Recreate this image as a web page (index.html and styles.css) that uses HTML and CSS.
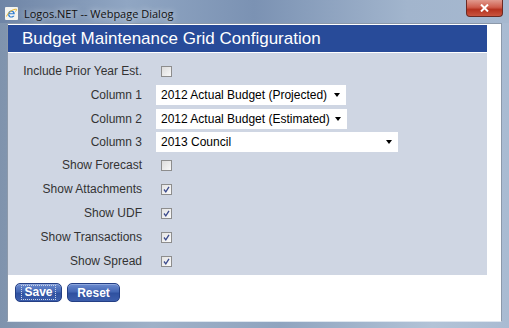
FILE: index.html
```html
<!DOCTYPE html>
<html>
<head>
<meta charset="utf-8">
<link rel="stylesheet" href="styles.css">
</head>
<body>
<div class="window">
  <div class="titlebar">
    <svg class="ie-icon" width="13" height="13" viewBox="0 0 13 13">
      <rect x="0" y="0" width="13" height="13" rx="1" fill="#f4f4f0"/>
      <path d="M3 7.2 H9.8 C9.8 5 8.4 3.6 6.5 3.6 C4.5 3.6 3 5.2 3 7.2 C3 9.3 4.5 10.6 6.4 10.6 C7.8 10.6 9 9.9 9.5 8.8 H7.9 C7.6 9.3 7.1 9.5 6.5 9.5 C5.5 9.5 4.7 8.9 4.6 7.9 Z M4.7 6.3 C4.9 5.3 5.6 4.7 6.5 4.7 C7.4 4.7 8.1 5.3 8.2 6.3 Z" fill="#2a7ad0"/>
      <path d="M1.5 9.5 C3 5 8 2 11.5 2.2 C12 3 11 4 10.2 4.6" fill="none" stroke="#e8b32a" stroke-width="1"/>
    </svg>
    <span class="title-text">Logos.NET -- Webpage Dialog</span>
    <div class="close-btn">
      <svg width="9" height="8" viewBox="0 0 9 8"><path d="M1 0.5 L8 7.5 M8 0.5 L1 7.5" stroke="#fff" stroke-width="2"/></svg>
    </div>
  </div>
  <div class="client">
    <div class="header">Budget Maintenance Grid Configuration</div>
    <div class="panel">
      <div class="row r24"><span class="label">Include Prior Year Est.</span><span class="chk"></span></div>
      <div class="row r24"><span class="label">Column 1</span><div class="select w190">2012 Actual Budget (Projected)<span class="arrow"></span></div></div>
      <div class="row r23"><span class="label">Column 2</span><div class="select w191">2012 Actual Budget (Estimated)<span class="arrow"></span></div></div>
      <div class="row r23"><span class="label">Column 3</span><div class="select w242">2013 Council<span class="arrow"></span></div></div>
      <div class="row r24"><span class="label">Show Forecast</span><span class="chk"></span></div>
      <div class="row r24"><span class="label">Show Attachments</span><span class="chk on"><svg width="9" height="9" viewBox="0 0 9 9"><path d="M2 4.5 L3.8 6.8 L7 1.8" fill="none" stroke="#3b4a8c" stroke-width="1.3"/></svg></span></div>
      <div class="row r24"><span class="label">Show UDF</span><span class="chk on"><svg width="9" height="9" viewBox="0 0 9 9"><path d="M2 4.5 L3.8 6.8 L7 1.8" fill="none" stroke="#3b4a8c" stroke-width="1.3"/></svg></span></div>
      <div class="row r24"><span class="label">Show Transactions</span><span class="chk on"><svg width="9" height="9" viewBox="0 0 9 9"><path d="M2 4.5 L3.8 6.8 L7 1.8" fill="none" stroke="#3b4a8c" stroke-width="1.3"/></svg></span></div>
      <div class="row r24"><span class="label">Show Spread</span><span class="chk on"><svg width="9" height="9" viewBox="0 0 9 9"><path d="M2 4.5 L3.8 6.8 L7 1.8" fill="none" stroke="#3b4a8c" stroke-width="1.3"/></svg></span></div>
    </div>
    <div class="buttons">
      <button class="btn save"><span class="focus">Save</span></button>
      <button class="btn reset">Reset</button>
    </div>
  </div>
</div>
</body>
</html>
```
FILE: styles.css
```css
* { box-sizing: border-box; }
html, body { margin: 0; padding: 0; }
body { width: 509px; height: 328px; overflow: hidden; font-family: "Liberation Sans", Arial, sans-serif; }

.window {
  width: 509px;
  height: 328px;
  display: flex;
  flex-direction: column;
  background: linear-gradient(90deg, #7f93ad 0%, #9fb1c8 30%, #8fa4bf 55%, #b2c3d7 85%, #a9bbd2 100%);
  padding: 0 7px 6px 7px;
}

.titlebar {
  height: 23px;
  display: flex;
  align-items: center;
  position: relative;
  margin: 0 -7px;
  padding-left: 5px;
  background: linear-gradient(90deg, #6f85a6 0%, #90a6c3 25%, #7b92b3 50%, #a2b5cd 80%, #a6b8cf 100%);
}
.ie-icon { margin-top: 3px; }
.title-text {
  margin-left: 6px;
  margin-top: 3px;
  font-family: "Open Sans", "DejaVu Sans", sans-serif;
  font-size: 11px;
  color: #111;
  text-shadow: 0 0 6px rgba(255,255,255,0.8);
}
.close-btn {
  position: absolute;
  right: 6px;
  top: 0;
  width: 37px;
  height: 17px;
  border: 1px solid #6b2a23;
  border-top: none;
  border-radius: 0 0 4px 4px;
  background: linear-gradient(#e19a8e 0%, #cf5e4d 45%, #b5321f 60%, #c9553f 100%);
  display: flex;
  align-items: center;
  justify-content: center;
}

.client {
  flex: 1;
  background: #fff;
  border: 1px solid #8c99aa;
  border-bottom-color: #dfe6ef;
  padding: 0 14px 0 0;
  display: flex;
  flex-direction: column;
}

.header {
  height: 27px;
  margin-top: 1px;
  background: #284b99;
  color: #fff;
  font-size: 17px;
  padding-left: 14px;
  line-height: 27px;
  border-bottom: 1px solid #fff;
  height: 28px;
}

.panel {
  background: #cfd6e3;
  height: 222px;
  padding-top: 6px;
  display: flex;
  flex-direction: column;
}

.row {
  display: flex;
  align-items: center;
}
.r24 { height: 24px; }
.r23 { height: 23px; }

.label {
  width: 134px;
  text-align: right;
  font-size: 12px;
  color: #333;
  margin-right: 14px;
}

.chk {
  width: 11px;
  height: 11px;
  margin-left: 5px;
  border: 1px solid #8d8d8d;
  background: linear-gradient(135deg, #dcdcdc, #f8f8f8);
  display: flex;
  align-items: center;
  justify-content: center;
}
.chk.on { background: linear-gradient(135deg, #e4e4e4, #fafafa); }

.select {
  height: 20px;
  background: #fff;
  font-size: 12px;
  color: #000;
  padding-left: 5px;
  display: flex;
  align-items: center;
  position: relative;
}
.w190 { width: 190px; }
.w191 { width: 191px; }
.w242 { width: 242px; }
.arrow {
  position: absolute;
  right: 6px;
  top: 8px;
  width: 0;
  height: 0;
  border-left: 3px solid transparent;
  border-right: 3px solid transparent;
  border-top: 4px solid #000;
}

.buttons {
  display: flex;
  gap: 5px;
  padding: 8px 0 0 7px;
}
.btn {
  height: 19px;
  padding: 0;
  border: 1px solid #243f85;
  border-radius: 5px;
  background: linear-gradient(#6b8bd0 0%, #4467b4 45%, #2f51a0 55%, #3c5eac 100%);
  box-shadow: inset 0 1px 0 #8fa8de;
  color: #fff;
  font-family: "Liberation Sans", Arial, sans-serif;
  font-weight: bold;
  font-size: 12px;
  display: flex;
  align-items: center;
  justify-content: center;
}
.save { width: 47px; }
.reset { width: 53px; }
.focus {
  border: 1px dotted #c9d2e6;
  padding: 0 2px;
  line-height: 13px;
}
```
